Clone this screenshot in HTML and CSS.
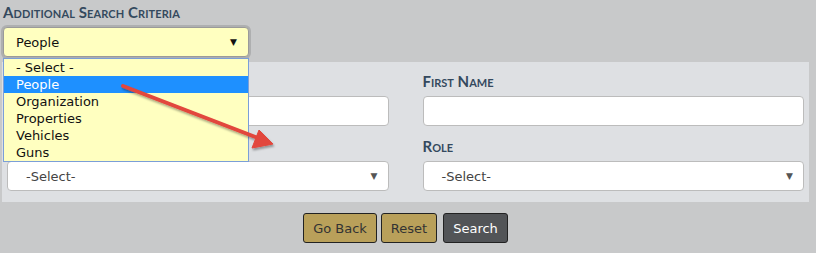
FILE: index.html
```html
<!DOCTYPE html>
<html lang="en">
<head>
    <meta charset="UTF-8">
    <title>Additional Search Criteria</title>
    <link rel="stylesheet" href="styles.css">
</head>
<body>
    <div class="page">
        <div class="section-title">Additional Search Criteria</div>

        <div class="type-picker">
            <div class="picker-box">
                <span>People</span>
                <span class="caret">&#9660;</span>
            </div>
            <ul class="picker-list">
                <li>- Select -</li>
                <li class="active">People</li>
                <li>Organization</li>
                <li>Properties</li>
                <li>Vehicles</li>
                <li>Guns</li>
            </ul>
        </div>

        <div class="panel">
            <div class="field">
                <label>Last Name</label>
                <div class="input"></div>
            </div>
            <div class="field">
                <label>First Name</label>
                <div class="input"></div>
            </div>
            <div class="field">
                <label>Gender</label>
                <div class="input select"><span>-Select-</span><span class="caret">&#9660;</span></div>
            </div>
            <div class="field">
                <label>Role</label>
                <div class="input select"><span>-Select-</span><span class="caret">&#9660;</span></div>
            </div>
        </div>

        <div class="actions">
            <button class="btn">Go Back</button>
            <button class="btn">Reset</button>
            <button class="btn dark">Search</button>
        </div>

        <svg class="pointer" width="816" height="253" viewBox="0 0 816 253">
            <defs>
                <filter id="shade" x="-20%" y="-20%" width="140%" height="140%">
                    <feDropShadow dx="1" dy="2" stdDeviation="1.2" flood-color="#000" flood-opacity="0.35"/>
                </filter>
            </defs>
            <g filter="url(#shade)" fill="#e2463c" stroke="#e2463c">
                <line x1="123" y1="86" x2="258" y2="138" stroke-width="4" stroke-linecap="round"/>
                <polygon points="273,144 252,148 259,130" stroke-width="1" stroke-linejoin="round"/>
            </g>
        </svg>
    </div>
</body>
</html>
```

FILE: styles.css
```css
body {
    margin: 0;
    background-color: #c8c9ca;
    font-family: "DejaVu Sans", Verdana, sans-serif;
    font-size: 12px;
    color: #222;
}

.page {
    position: relative;
    width: 816px;
    height: 253px;
    overflow: hidden;
}

.section-title {
    padding: 3px 0 0 3px;
    height: 24px;
    box-sizing: border-box;
    font-family: Lato, "Liberation Sans", sans-serif;
    font-weight: bold;
    font-variant: small-caps;
    font-size: 15px;
    color: #34495e;
    letter-spacing: 0.1px;
}

.type-picker {
    position: relative;
    margin: 3px 0 0 3px;
    width: 246px;
    z-index: 2;
}

.picker-box {
    height: 30px;
    box-sizing: border-box;
    display: flex;
    align-items: center;
    justify-content: space-between;
    padding: 0 11px 0 12px;
    background-color: #ffffc0;
    border: 1px solid #9a9a9a;
    border-radius: 4px;
    box-shadow: 0 0 0 2px #aeafb0;
    font-size: 13px;
    color: #111;
}

.picker-box .caret {
    font-size: 9px;
}

.picker-list {
    position: absolute;
    top: 31px;
    left: 0;
    list-style: none;
    margin: 0;
    padding: 0;
    width: 244px;
    background-color: #ffffc0;
    border: 1px solid #7b9fd8;
    font-size: 13px;
    color: #111;
}

.picker-list li {
    height: 17px;
    line-height: 17px;
    padding-left: 12px;
}

.picker-list li.active {
    background-color: #1e90ff;
    color: #fff;
}

.panel {
    margin: 5px 7px 0 2px;
    height: 140px;
    box-sizing: border-box;
    padding: 11px 5px 0 5px;
    background-color: #dee0e3;
    display: grid;
    grid-template-columns: 1fr 1fr;
    align-content: start;
    column-gap: 34px;
    row-gap: 12px;
}

.field label {
    display: block;
    height: 23px;
    line-height: 17px;
    font-family: Lato, "Liberation Sans", sans-serif;
    font-weight: bold;
    font-variant: small-caps;
    font-size: 15px;
    color: #34495e;
}

.field:nth-child(odd) label {
    visibility: hidden;
}

.input {
    height: 30px;
    box-sizing: border-box;
    background-color: #fff;
    border: 1px solid #bcbcbc;
    border-radius: 4px;
}

.input.select {
    display: flex;
    align-items: center;
    justify-content: space-between;
    padding: 0 10px 0 18px;
    font-size: 13px;
    color: #444;
}

.input.select .caret {
    font-size: 9px;
    color: #555;
}

.actions {
    display: flex;
    justify-content: center;
    gap: 4px;
    margin: 11px 7px 0 2px;
}

.btn {
    height: 30px;
    padding: 0 9px;
    font-family: "DejaVu Sans", Verdana, sans-serif;
    font-size: 13px;
    color: #333;
    background-color: #b9a05a;
    border: 1px solid #222;
    border-radius: 3px;
}

.btn.dark {
    margin-left: 2px;
    background-color: #525457;
    color: #fff;
}

.pointer {
    position: absolute;
    top: 0;
    left: 0;
    z-index: 3;
    pointer-events: none;
}
```
